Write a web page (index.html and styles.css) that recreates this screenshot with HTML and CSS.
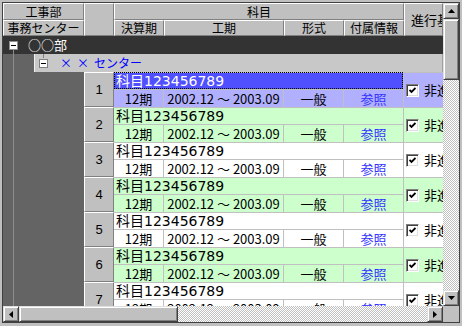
FILE: index.html
```html
<!DOCTYPE html>
<html lang="ja">
<head>
    <meta charset="UTF-8">
    <title>工事部 科目一覧</title>
    <link rel="stylesheet" href="styles.css">
</head>
<body>

    <div class="window">
        <div class="main">
            <!-- Column headers -->
            <div class="head">
                <div class="head-left">
                    <div class="hcell h-top">工事部</div>
                    <div class="hcell h-bottom">事務センター</div>
                </div>
                <div class="hcell head-num"></div>
                <div class="head-cols">
                    <div class="hcell h-top">科目</div>
                    <div class="head-sub">
                        <div class="hcell h-bottom">決算期</div>
                        <div class="hcell h-bottom">工期</div>
                        <div class="hcell h-bottom">形式</div>
                        <div class="hcell h-bottom">付属情報</div>
                    </div>
                </div>
                <div class="hcell head-prog">進行基準</div>
            </div>

            <div class="dept">
                <svg class="toggle" width="9" height="9" viewBox="0 0 9 9"><rect x="0.5" y="0.5" width="8" height="8" fill="#fff" stroke="#909090"/><path d="M2 4.5h5" stroke="#000"/></svg>
                <span>○○部</span>
            </div>

            <div class="tree">
                <div class="center">
                    <svg class="toggle" width="9" height="9" viewBox="0 0 9 9"><rect x="0.5" y="0.5" width="8" height="8" fill="#fff" stroke="#808080"/><path d="M2 4.5h5" stroke="#000"/></svg>
                    <span><span class="wide">××</span>センター</span>
                </div>

                <div class="rows" id="rows"></div>
            </div>
        </div>

        <!-- Vertical scrollbar -->
        <div class="vscroll">
            <div class="sbtn"><svg width="7" height="4" viewBox="0 0 7 4"><path d="M3.5 0L7 4H0z"/></svg></div>
            <div class="sbtn vthumb"></div>
            <div class="track"></div>
            <div class="sbtn"><svg width="7" height="4" viewBox="0 0 7 4"><path d="M0 0h7L3.5 4z"/></svg></div>
        </div>

        <!-- Horizontal scrollbar -->
        <div class="hscroll">
            <div class="sbtn"><svg width="4" height="7" viewBox="0 0 4 7"><path d="M4 0v7L0 3.5z"/></svg></div>
            <div class="sbtn hthumb"></div>
            <div class="track"></div>
            <div class="sbtn"><svg width="4" height="7" viewBox="0 0 4 7"><path d="M0 0l4 3.5L0 7z"/></svg></div>
        </div>

        <div class="corner"></div>
    </div>

    <script>
        const rows = document.getElementById('rows');
        const check = '<span class="box"><svg width="7" height="7" viewBox="0 0 7 7"><path d="M0.5 3l2 2L6.5 1" fill="none" stroke="#000" stroke-width="1.8"/></svg></span>';

        // Build the 7 rows; first one is selected, even rows are green
        for (let i = 1; i <= 7; i++) {
            let cls = 'row';
            if (i === 1) cls += ' sel';
            else if (i % 2 === 0) cls += ' green';

            rows.innerHTML += `
                <div class="${cls}">
                    <div class="num">${i}</div>
                    <div class="detail">
                        <div class="title">科目123456789</div>
                        <div class="sub">
                            <div class="cell">12期</div>
                            <div class="cell">2002.12&nbsp;～&nbsp;2003.09</div>
                            <div class="cell">一般</div>
                            <div class="cell link">参照</div>
                        </div>
                    </div>
                    <div class="check">${check}<span>非進行</span></div>
                </div>`;
        }
    </script>

</body>
</html>
```

FILE: styles.css
```css
body {
    margin: 0;
    background-color: #c0c0c0;
    font-family: "Noto Sans CJK JP", sans-serif;
    font-size: 12px;
    color: #000;
}

.window {
    margin: 2px 0 0 2px;
    width: 456px;
    height: 319px;
    border: 1px solid #404040;
    display: grid;
    grid-template-columns: 440px 16px;
    grid-template-rows: 303px 16px;
    background-color: #c0c0c0;
}

.main {
    display: flex;
    flex-direction: column;
    overflow: hidden;
    background-color: #646464;
}

/* Header */
.head {
    display: flex;
    height: 33px;
    flex-shrink: 0;
    background-color: #c0c0c0;
}

.hcell {
    box-sizing: border-box;
    background-color: #c0c0c0;
    border: 1px solid;
    border-color: #fff #808080 #808080 #fff;
    display: flex;
    align-items: center;
    justify-content: center;
    line-height: 14px;
    white-space: nowrap;
    overflow: hidden;
}

.h-top {
    height: 17px;
}

.h-bottom {
    height: 16px;
}

.head-left {
    width: 81px;
    display: flex;
    flex-direction: column;
}

.head-num {
    width: 30px;
    height: 33px;
}

.head-cols {
    width: 290px;
    display: flex;
    flex-direction: column;
}

.head-sub {
    display: grid;
    grid-template-columns: 50px 120px 60px 60px;
}

.head-prog {
    flex: 1;
    height: 33px;
    justify-content: flex-start;
    padding-left: 6px;
    font-size: 13px;
}

/* Tree */
.dept {
    height: 18px;
    flex-shrink: 0;
    display: flex;
    align-items: center;
    padding-left: 6px;
    gap: 10px;
    color: #fff;
    font-size: 13px;
    line-height: 14px;
    background: linear-gradient(#8c8c8c, #8c8c8c) 10px 14px / 1px 4px no-repeat, #333333;
}

.toggle {
    display: block;
    flex-shrink: 0;
}

.tree {
    flex: 1;
    min-height: 0;
    background: linear-gradient(to right, transparent 10px, #8c8c8c 10px, #8c8c8c 11px, transparent 11px), #646464;
}

.center {
    box-sizing: border-box;
    height: 18px;
    margin-left: 31px;
    border-left: 1px solid #f0f0f0;
    border-right: 1px solid #a0a0a0;
    display: flex;
    align-items: center;
    padding-left: 4px;
    gap: 12px;
    color: #0000ff;
    line-height: 14px;
    background: linear-gradient(#808080, #808080) 8px 0 / 1px 4px no-repeat, #c8c8c8;
}

/* the × signs are full-width in the original */
.wide {
    letter-spacing: 5px;
}

.rows {
    margin-left: 81px;
}

.row {
    display: flex;
    height: 35px;
    background-color: #fff;
}

.num {
    box-sizing: border-box;
    width: 30px;
    height: 35px;
    background-color: #c0c0c0;
    border: 1px solid;
    border-color: #fff #808080 #808080 #fff;
    display: flex;
    align-items: center;
    justify-content: center;
    font-family: "Liberation Sans", sans-serif;
    font-size: 13px;
}

.detail {
    width: 290px;
    box-sizing: border-box;
    border-right: 1px solid #c0c0c0;
}

.title {
    box-sizing: border-box;
    height: 17px;
    border-top: 1px solid #c0c0c0;
    padding-left: 2px;
    font-family: "DejaVu Sans", "Noto Sans CJK JP", sans-serif;
    font-size: 14px;
    line-height: 16px;
    white-space: nowrap;
    overflow: hidden;
}

.sub {
    box-sizing: border-box;
    height: 18px;
    border-top: 1px solid #c0c0c0;
    display: grid;
    grid-template-columns: 50px 120px 60px 59px;
    font-size: 13px;
}

.cell {
    border-right: 1px solid #c0c0c0;
    display: flex;
    align-items: center;
    justify-content: center;
    line-height: 15px;
    white-space: nowrap;
    overflow: hidden;
}

.cell:last-child {
    border-right: none;
}

.link {
    color: #3333ff;
}

.check {
    flex: 1;
    box-sizing: border-box;
    border-top: 1px solid #c0c0c0;
    display: flex;
    align-items: center;
    gap: 5px;
    padding-left: 2px;
    white-space: nowrap;
    overflow: hidden;
    font-size: 13px;
    line-height: 14px;
}

.box {
    box-sizing: border-box;
    width: 13px;
    height: 13px;
    flex-shrink: 0;
    background-color: #fff;
    border: 1px solid;
    border-color: #808080 #fff #fff #808080;
    box-shadow: inset 1px 1px #404040, inset -1px -1px #dfdfdf;
    display: flex;
    align-items: center;
    justify-content: center;
}

.box svg {
    display: block;
}

/* Row colours */
.green,
.green .check {
    background-color: #ccffcc;
}

.sel .title {
    background-color: #5050ff;
    color: white;
    outline: 1px dotted #000;
    outline-offset: -1px;
}

.sel .sub,
.sel .check {
    background-color: #b0b0ff;
}

/* Scrollbars */
.vscroll {
    display: flex;
    flex-direction: column;
}

.hscroll {
    display: flex;
}

.sbtn {
    box-sizing: border-box;
    width: 16px;
    height: 16px;
    flex-shrink: 0;
    background-color: #c0c0c0;
    border: 1px solid;
    border-color: #dfdfdf #404040 #404040 #dfdfdf;
    box-shadow: inset 1px 1px #fff, inset -1px -1px #808080;
    display: flex;
    align-items: center;
    justify-content: center;
}

.sbtn svg {
    display: block;
}

.vthumb {
    height: 61px;
}

.hthumb {
    width: 159px;
}

.track {
    flex: 1;
    background: repeating-conic-gradient(#c0c0c0 0 25%, #fff 0 50%) 0 0 / 2px 2px;
}

.corner {
    background-color: #c0c0c0;
}
```
